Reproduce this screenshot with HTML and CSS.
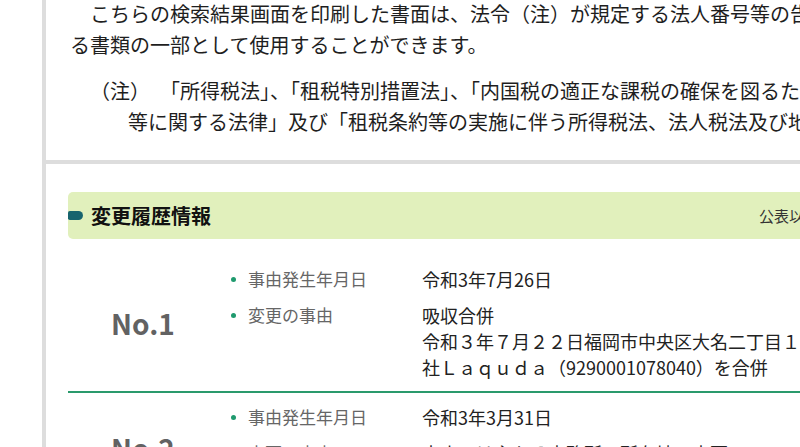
FILE: index.html
```html
<!DOCTYPE html>
<html lang="ja">
<head>
<meta charset="utf-8">
<title>変更履歴情報</title>
<link rel="stylesheet" href="styles.css">
</head>
<body>
<div class="page">
  <section class="notice">
    <p class="lead">こちらの検索結果画面を印刷した書面は、法令（注）が規定する法人番号等の告知を要す<br>る書類の一部として使用することができます。</p>
    <p class="note"><span class="note-mark">（注）</span>「所得税法」、「租税特別措置法」、「内国税の適正な課税の確保を図るための国外送金等に係る調書の提出<br>等に関する法律」及び「租税条約等の実施に伴う所得税法、法人税法及び地方税法の特例等に関する法律」</p>
  </section>
  <section class="history">
    <div class="history-head">
      <h2 class="history-title"><span class="marker"></span>変更履歴情報</h2>
      <span class="history-note">公表以前の変更履歴を表示</span>
    </div>
    <div class="rows">
      <div class="row">
        <div class="row-no">No.1</div>
        <ul class="items">
          <li class="item">
            <span class="label">事由発生年月日</span>
            <div class="value"><p>令和3年7月26日</p></div>
          </li>
          <li class="item">
            <span class="label">変更の事由</span>
            <div class="value">
              <p>吸収合併</p>
              <p>令和３年７月２２日福岡市中央区大名二丁目１２番１号株式会<br>社Ｌａｑｕｄａ（9290001078040）を合併</p>
            </div>
          </li>
        </ul>
      </div>
      <div class="row">
        <div class="row-no">No.2</div>
        <ul class="items">
          <li class="item">
            <span class="label">事由発生年月日</span>
            <div class="value"><p>令和3年3月31日</p></div>
          </li>
          <li class="item">
            <span class="label">変更の事由</span>
            <div class="value">
              <p>本店又は主たる事務所の所在地の変更</p>
              <p>福岡県福岡市中央区大名二丁目１２番１号</p>
            </div>
          </li>
        </ul>
      </div>
    </div>
  </section>
</div>
</body>
</html>
```

FILE: styles.css
```css
html, body {
  margin: 0;
  padding: 0;
  background: #ffffff;
}

body {
  overflow: hidden;
  font-family: "Noto Sans CJK JP", "Noto Sans", sans-serif;
  color: #1e1e1e;
}

.page {
  width: 940px;
  margin-left: 42px;
}

.notice {
  border-left: 4px solid #dddddd;
  border-bottom: 4px solid #dddddd;
  padding: 0 0 23px 24px;
}

.lead,
.note {
  font-size: 20px;
  line-height: 31px;
  white-space: nowrap;
  color: #1e1e1e;
}

.lead {
  margin: -2px 0 0;
  text-indent: 20px;
}

.note {
  margin: 15px 0 0;
  padding-left: 58px;
  text-indent: -38px;
}

.note-mark {
  margin-right: 20px;
}

.history {
  border-left: 4px solid #dddddd;
  padding: 28px 28px 0 22px;
}

.history-head {
  display: flex;
  align-items: center;
  justify-content: space-between;
  height: 47px;
  background: #e1f0bc;
  border-radius: 5px;
  padding-right: 15px;
}

.history-title {
  margin: 0;
  display: flex;
  align-items: center;
  gap: 8px;
  font-size: 20px;
  font-weight: 700;
  color: #111111;
}

.marker {
  width: 15px;
  height: 9px;
  background: #17646e;
  border-radius: 2px 5px 5px 2px;
}

.history-note {
  font-size: 15px;
  color: #333333;
}

.rows {
  margin-top: 16px;
}

.row {
  display: flex;
  align-items: center;
  padding: 11px 0 11px;
  border-bottom: 2px solid #2a9a6c;
}

.row-no {
  width: 150px;
  flex-shrink: 0;
  text-align: center;
  font-size: 28px;
  line-height: 1;
  font-weight: 700;
  color: #626262;
}

.items {
  list-style: none;
  margin: 0;
  padding: 0 0 0 13px;
  flex: 1;
}

.item {
  display: flex;
}

.item + .item {
  margin-top: 10px;
}

.label {
  width: 191px;
  flex-shrink: 0;
  display: flex;
  align-items: flex-start;
  font-size: 17px;
  line-height: 26px;
  color: #666666;
}

.label::before {
  content: "";
  width: 5px;
  height: 5px;
  border-radius: 50%;
  background: #1f9a6e;
  margin: 11px 12px 0 0;
  flex-shrink: 0;
}

.value {
  font-size: 18px;
  line-height: 26px;
  color: #222222;
  white-space: nowrap;
}

.value p {
  margin: 0;
}
```
